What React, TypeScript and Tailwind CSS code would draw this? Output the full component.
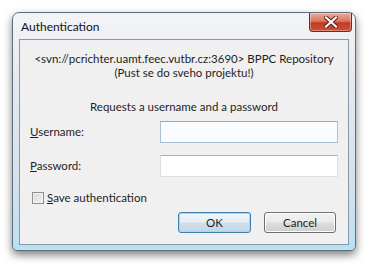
import React from 'react';

const font = { fontFamily: 'Lato, "Noto Sans", Arial, sans-serif' };

const CloseGlyph: React.FC = () => (
  <svg width="14" height="12" viewBox="0 0 14 12">
    <path d="M2 1.5 L12 10.5 M12 1.5 L2 10.5" stroke="#5a1a10" strokeWidth="4" strokeLinecap="square" />
    <path d="M2 1.5 L12 10.5 M12 1.5 L2 10.5" stroke="#ffffff" strokeWidth="2.2" strokeLinecap="square" />
  </svg>
);

const Field: React.FC<{ label: string; focused?: boolean }> = ({ label, focused }) => (
  <div className="flex items-center h-[22px]">
    <span className="w-[131px] text-[11.5px] text-[#1e1e1e]">
      <span className="underline">{label[0]}</span>
      {label.slice(1)}
    </span>
    <div
      className={
        focused
          ? 'w-[179px] h-[22px] bg-[#fafdff] border border-[#a9bfd6] border-t-[#8ea8c2]'
          : 'w-[179px] h-[22px] bg-white border border-[#dde1e6] border-t-[#abadb3]'
      }
    />
  </div>
);

const DialogButton: React.FC<{ label: string; primary?: boolean }> = ({ label, primary }) => (
  <button
    className={
      primary
        ? 'w-[73px] h-[21px] rounded-[3px] border border-[#3c7fb1] text-[11.5px] text-[#1e1e1e] bg-[linear-gradient(to_bottom,#f1f6fa_0%,#e6eef5_48%,#cfdfeb_52%,#c2d6e6_100%)] shadow-[inset_0_0_0_1px_#a8d8f0]'
        : 'w-[72px] h-[21px] rounded-[3px] border border-[#707070] text-[11.5px] text-[#1e1e1e] bg-[linear-gradient(to_bottom,#f2f2f2_0%,#ebebeb_48%,#dddddd_52%,#cfcfcf_100%)] shadow-[inset_0_0_0_1px_#fcfcfc]'
    }
    style={font}
  >
    {label}
  </button>
);

const App: React.FC = () => {
  return (
    <div className="w-[371px] h-[267px] bg-white pt-[12px] pl-[12px]" style={font}>
      <div className="w-[344px] h-[239px] flex flex-col rounded-t-[7px] rounded-b-[5px] border border-[#5f6e7d] bg-[linear-gradient(to_bottom,#f3f4f6_0%,#e4e9ef_30%,#d3e0ec_75%,#b8e2f5_100%)] shadow-[0_4px_9px_rgba(0,0,0,0.5)] px-[6px] pb-[5px]">
        <div className="h-[26px] flex items-start justify-between">
          <span className="pl-[2px] pt-[5px] text-[12px] text-[#111]">Authentication</span>
          <div className="mr-[-3px] w-[43px] h-[19px] flex items-center justify-center rounded-b-[4px] border border-t-0 border-[#6d2b20] bg-[linear-gradient(to_bottom,#ecab9b_0%,#dc7761_45%,#c43a22_55%,#cc4f33_100%)] shadow-[inset_0_0_0_1px_rgba(255,255,255,0.35)]">
            <CloseGlyph />
          </div>
        </div>
        <div className="flex-1 flex flex-col bg-[#f0f0f0] border border-[#8a98a6] px-[10px] pt-[12px] pb-[11px]">
          <div className="text-center text-[11.5px] leading-[14px] text-[#1e1e1e]">
            <div className="whitespace-nowrap">&lt;svn://pcrichter.uamt.feec.vutbr.cz:3690&gt; BPPC Repository</div>
            <div>(Pust se do sveho projektu!)</div>
          </div>
          <div className="mt-[20px] text-center text-[11.5px] leading-[14px] text-[#1e1e1e]">
            Requests a username and a password
          </div>
          <div className="mt-[7px]">
            <Field label="Username:" focused />
          </div>
          <div className="mt-[12px]">
            <Field label="Password:" />
          </div>
          <div className="mt-[15px] flex items-center h-[12px] pl-[2px]">
            <div className="w-[12px] h-[12px] border border-[#8e8f8f] bg-[linear-gradient(135deg,#d4d4d4,#f6f6f6)] shadow-[inset_0_0_0_1px_#f4f4f4]" />
            <span className="ml-[3px] text-[11.5px] text-[#1e1e1e]">
              <span className="underline">S</span>ave authentication
            </span>
          </div>
          <div className="mt-[8px] flex justify-end gap-[13px] pr-[2px]">
            <DialogButton label="OK" primary />
            <DialogButton label="Cancel" />
          </div>
        </div>
      </div>
    </div>
  );
};

export default App;
